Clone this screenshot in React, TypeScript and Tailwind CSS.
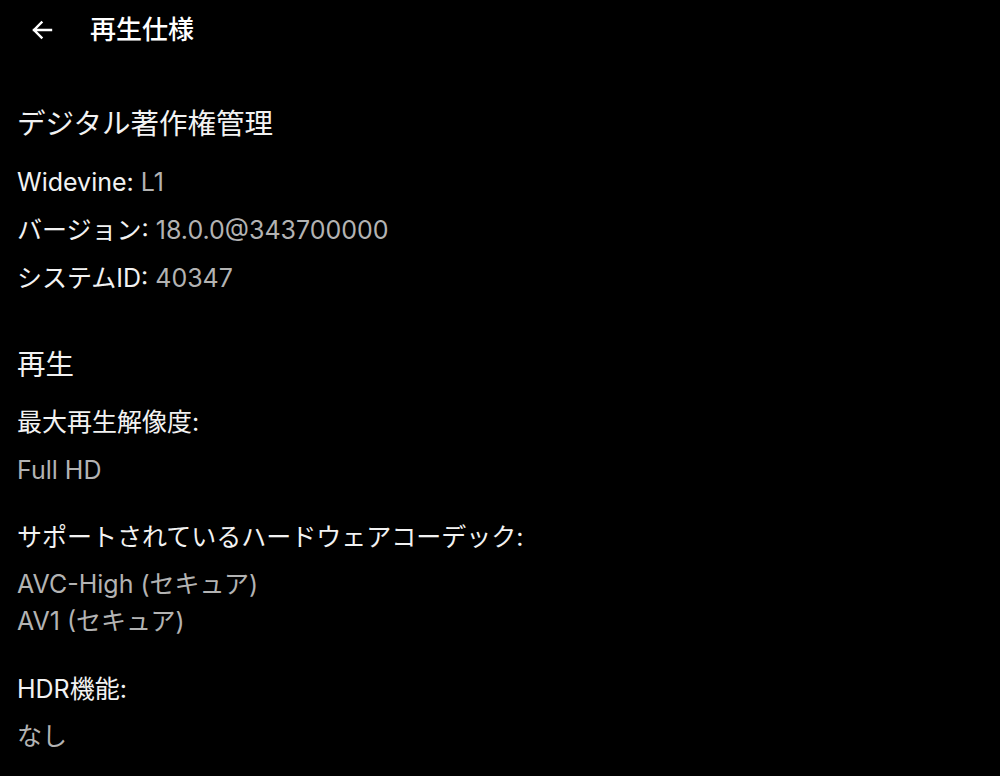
import React from 'react';

const font = { fontFamily: 'Inter, "Noto Sans CJK JP", sans-serif' };

function BackArrow() {
  return (
    <svg width="22" height="20" viewBox="0 0 22 20" fill="none" className="text-white">
      <path d="M20 10H3M10.5 2.5L3 10l7.5 7.5" stroke="currentColor" strokeWidth="2.4" strokeLinecap="square" />
    </svg>
  );
}

export default function App() {
  return (
    <div className="min-h-[776px] w-[1000px] bg-black text-[#f2f2f2]" style={font}>
      <header className="flex h-[60px] items-center">
        <div className="flex w-[90px] pl-[31px]">
          <BackArrow />
        </div>
        <h1 className="text-[26px] leading-none font-medium text-white">再生仕様</h1>
      </header>

      <main className="px-[17px]">
        <section className="mt-[44px]">
          <h2 className="text-[28.5px] leading-[40px] text-[#f2f2f2]">デジタル著作権管理</h2>
          <div className="mt-[19.5px] text-[25px] leading-[37px]">
            <p>Widevine: <span className="text-[#b3b3b3]">L1</span></p>
            <p className="mt-[11px]">バージョン: <span className="text-[#b3b3b3]">18.0.0@343700000</span></p>
            <p className="mt-[11px]">システムID: <span className="text-[#b3b3b3]">40347</span></p>
          </div>
        </section>

        <section className="mt-[48.5px]">
          <h2 className="text-[28.5px] leading-[40px] text-[#f2f2f2]">再生</h2>
          <div className="mt-[18.5px] text-[25px] leading-[37px]">
            <p>最大再生解像度:</p>
            <p className="mt-[11px] text-[#b3b3b3]">Full HD</p>

            <p className="mt-[30px]">サポートされているハードウェアコーデック:</p>
            <div className="mt-[10px] text-[#b3b3b3]">
              <p>AVC-High (セキュア)</p>
              <p>AV1 (セキュア)</p>
            </div>

            <p className="mt-[31px]">HDR機能:</p>
            <p className="mt-[10px] text-[#b3b3b3]">なし</p>
          </div>
        </section>
      </main>
    </div>
  );
}
